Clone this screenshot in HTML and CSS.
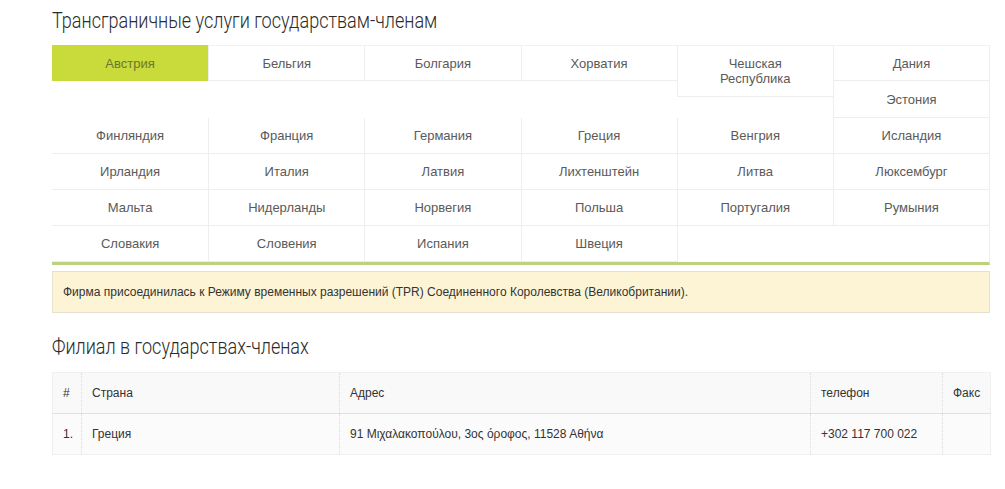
FILE: index.html
```html
<!DOCTYPE html>
<html lang="ru">
  <head>
    <meta charset="UTF-8" />
    <meta name="viewport" content="width=device-width, initial-scale=1.0" />
    <title>Трансграничные услуги</title>
    <link rel="stylesheet" href="styles.css">
  </head>
  <body>
    <div class="container">
      <h2 class="title"><span>Трансграничные услуги государствам-членам</span></h2>
      <div class="states">
        <div class="state active first top">Австрия</div>
        <div class="state top">Бельгия</div>
        <div class="state top">Болгария</div>
        <div class="state top">Хорватия</div>
        <div class="state top tall">Чешская<br />Республика</div>
        <div class="state top">Дания</div>
        <div class="state estonia">Эстония</div>
        <div class="state first">Финляндия</div>
        <div class="state">Франция</div>
        <div class="state">Германия</div>
        <div class="state">Греция</div>
        <div class="state">Венгрия</div>
        <div class="state">Исландия</div>
        <div class="state first">Ирландия</div>
        <div class="state">Италия</div>
        <div class="state">Латвия</div>
        <div class="state">Лихтенштейн</div>
        <div class="state">Литва</div>
        <div class="state">Люксембург</div>
        <div class="state first">Мальта</div>
        <div class="state">Нидерланды</div>
        <div class="state">Норвегия</div>
        <div class="state">Польша</div>
        <div class="state">Португалия</div>
        <div class="state">Румыния</div>
        <div class="state first">Словакия</div>
        <div class="state">Словения</div>
        <div class="state">Испания</div>
        <div class="state">Швеция</div>
        <div class="state empty"></div>
      </div>
      <div class="notice">
        Фирма присоединилась к Режиму временных разрешений (TPR) Соединенного Королевства (Великобритании).
      </div>

      <h2 class="title second"><span>Филиал в государствах-членах</span></h2>
      <table class="branches">
        <colgroup>
          <col class="c-num" />
          <col class="c-country" />
          <col class="c-address" />
          <col class="c-phone" />
          <col class="c-fax" />
        </colgroup>
        <thead>
          <tr>
            <th>#</th>
            <th>Страна</th>
            <th>Адрес</th>
            <th>телефон</th>
            <th>Факс</th>
          </tr>
        </thead>
        <tbody>
          <tr>
            <td>1.</td>
            <td>Греция</td>
            <td>91 Μιχαλακοπούλου, 3ος όροφος, 11528 Αθήνα</td>
            <td>+302 117 700 022</td>
            <td></td>
          </tr>
        </tbody>
      </table>
    </div>
  </body>
</html>
```

FILE: styles.css
```css
body {
  margin: 0;
  padding: 0;
  background-color: #fff;
  color: #333;
  font-family: "Liberation Sans", Arial, sans-serif;
}
.container {
  width: 938px;
  padding-left: 52px;
}
.title {
  font-family: Roboto, "Liberation Sans", sans-serif;
  font-weight: 300;
  font-size: 22px;
  line-height: 26px;
  color: #2b2b2b;
  margin: 8px 0 11px;
  white-space: nowrap;
}
/* condensed look for section headings */
.title span {
  display: inline-block;
  transform: scaleX(0.82);
  transform-origin: left center;
}
.title.second {
  margin: 21px 0 12px;
}

/* country tabs */
.states {
  display: grid;
  grid-template-columns: repeat(6, 1fr);
  grid-template-rows: 36px 37px;
  grid-auto-rows: 36px;
  border-right: 1px solid #eee;
  border-bottom: 3px solid #bcd27f;
  box-sizing: border-box;
}
.state {
  display: flex;
  align-items: center;
  justify-content: center;
  text-align: center;
  font-size: 13px;
  line-height: 15px;
  color: #5a5a5a;
  border-left: 1px solid #eee;
  border-bottom: 1px solid #eee;
  box-sizing: border-box;
}
.state.first {
  border-left: none;
}
.state.top {
  border-top: 1px solid #f2f2f2;
}
.state.active {
  background-color: #c8db3a;
  color: #6a772c;
  border-color: #c8db3a;
}
.state.tall {
  grid-row: span 2;
  align-self: start;
  height: 52px;
}
.state.estonia {
  grid-column: 6;
}
.state.empty {
  grid-column: span 2;
  border-bottom: none;
}

.notice {
  margin-top: 6px;
  background-color: #fdf4d6;
  border: 1px solid #e6e0cf;
  font-size: 12px;
  line-height: 40px;
  padding: 0 10px;
  color: #333;
}

/* branch table */
.branches {
  width: 100%;
  border-collapse: collapse;
  table-layout: fixed;
  font-size: 12px;
  color: #333;
  border: 1px solid #f0f0f0;
}
.c-num { width: 29px; }
.c-country { width: 258px; }
.c-address { width: 471px; }
.c-phone { width: 132px; }
.c-fax { width: 48px; }
.branches th,
.branches td {
  text-align: left;
  font-weight: normal;
  padding: 0 10px;
  height: 40px;
  border-left: 1px dotted #ddd;
  white-space: nowrap;
}
.branches th:first-child,
.branches td:first-child {
  border-left: none;
}
.branches thead tr {
  background-color: #f9f9f9;
  border-bottom: 1px solid #e0eab4;
}
.branches tbody tr {
  background-color: #fbfbfb;
  border-bottom: 1px dotted #ddd;
}
```
